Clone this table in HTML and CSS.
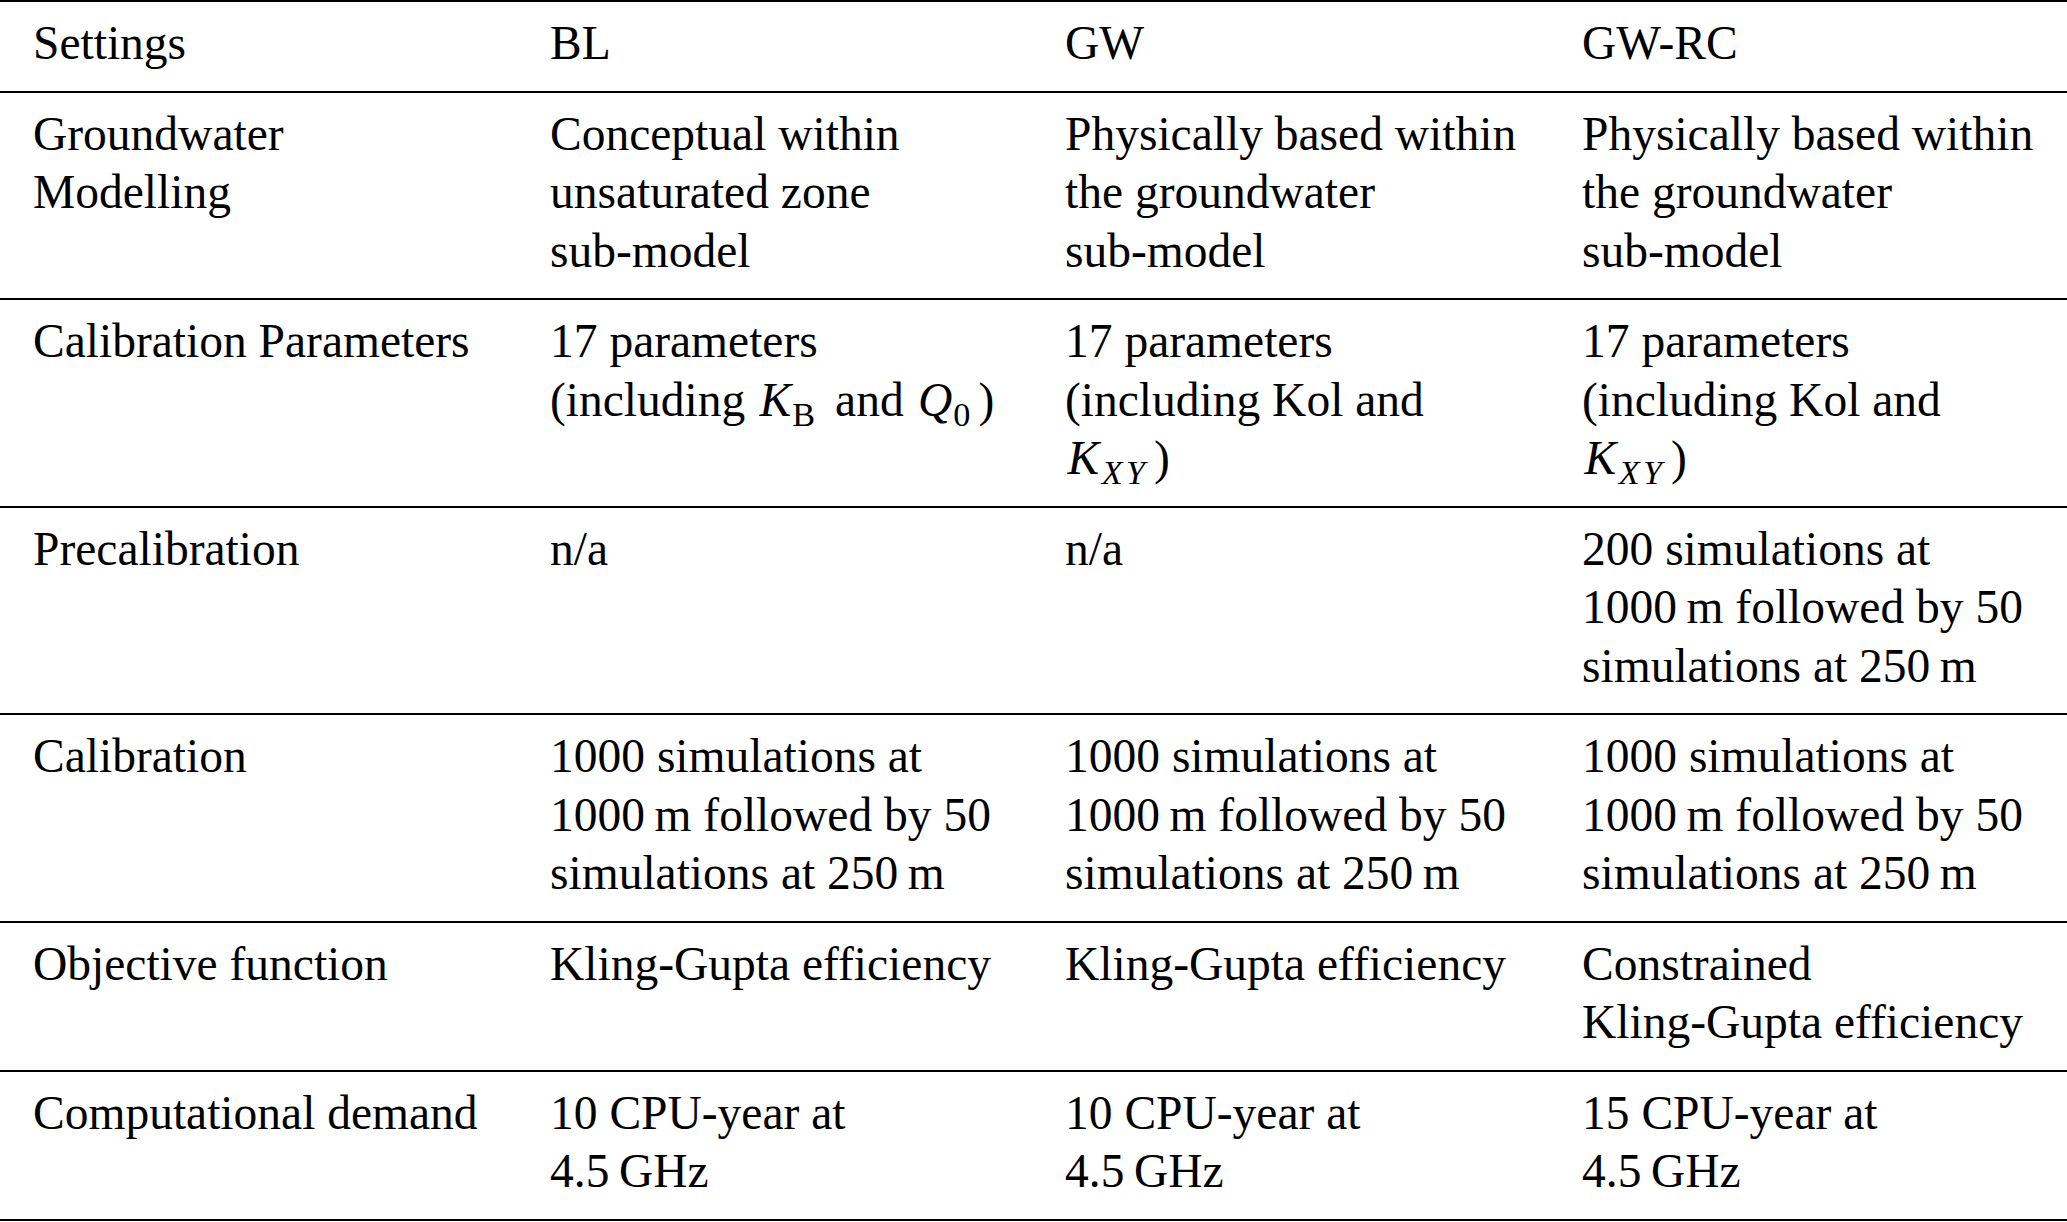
FILE: index.html
```html
<!DOCTYPE html>
<html lang="en">
<head>
<meta charset="utf-8">
<title>Model settings</title>
<link rel="stylesheet" href="styles.css">
</head>
<body>
<table class="settings">
  <colgroup>
    <col class="c1"><col class="c2"><col class="c3"><col class="c4">
  </colgroup>
  <thead>
    <tr><th>Settings</th><th>BL</th><th>GW</th><th>GW-RC</th></tr>
  </thead>
  <tbody>
    <tr>
      <td>Groundwater<br>Modelling</td>
      <td>Conceptual within<br>unsaturated zone<br>sub-model</td>
      <td>Physically based within<br>the groundwater<br>sub-model</td>
      <td>Physically based within<br>the groundwater<br>sub-model</td>
    </tr>
    <tr>
      <td>Calibration Parameters</td>
      <td>17 parameters<br>(including <span class="m">K</span><span class="sub">B</span> and <span class="m">Q</span><span class="sub">0</span>)</td>
      <td>17 parameters<br>(including Kol and<br><span class="m">K</span><span class="sub it">XY</span>)</td>
      <td>17 parameters<br>(including Kol and<br><span class="m">K</span><span class="sub it">XY</span>)</td>
    </tr>
    <tr>
      <td>Precalibration</td>
      <td>n/a</td>
      <td>n/a</td>
      <td>200 simulations at<br>1000&#8201;m followed by 50<br>simulations at 250&#8201;m</td>
    </tr>
    <tr>
      <td>Calibration</td>
      <td>1000 simulations at<br>1000&#8201;m followed by 50<br>simulations at 250&#8201;m</td>
      <td>1000 simulations at<br>1000&#8201;m followed by 50<br>simulations at 250&#8201;m</td>
      <td>1000 simulations at<br>1000&#8201;m followed by 50<br>simulations at 250&#8201;m</td>
    </tr>
    <tr>
      <td>Objective function</td>
      <td>Kling-Gupta efficiency</td>
      <td>Kling-Gupta efficiency</td>
      <td>Constrained<br>Kling-Gupta efficiency</td>
    </tr>
    <tr>
      <td>Computational demand</td>
      <td>10 CPU-year at<br>4.5&#8201;GHz</td>
      <td>10 CPU-year at<br>4.5&#8201;GHz</td>
      <td>15 CPU-year at<br>4.5&#8201;GHz</td>
    </tr>
  </tbody>
</table>
</body>
</html>
```

FILE: styles.css
```css
html, body {
  margin: 0;
  padding: 0;
  background: #fff;
}

body {
  font-family: "Liberation Serif", "Times New Roman", serif;
  font-size: 47.5px;
  color: #000;
}

.settings {
  width: 2067px;
  table-layout: fixed;
  border-collapse: collapse;
  border-top: 2px solid #000;
}

.c1 { width: 517px; }
.c2 { width: 515px; }
.c3 { width: 517px; }
.c4 { width: 518px; }

.settings th,
.settings td {
  font-weight: normal;
  text-align: left;
  vertical-align: top;
  white-space: nowrap;
  line-height: 58.5px;
  padding: 12px 0 18px 33px;
  border-bottom: 2px solid #000;
}

.m {
  font-style: italic;
  margin-left: 0.05em;
}

.sub {
  font-size: 0.72em;
  line-height: 0;
  position: relative;
  top: 0.3em;
  margin-left: 0.03em;
  margin-right: 0.24em;
}

.sub.it {
  font-style: italic;
  letter-spacing: 0.1em;
  margin-left: 0.08em;
  margin-right: 0.16em;
}
```
